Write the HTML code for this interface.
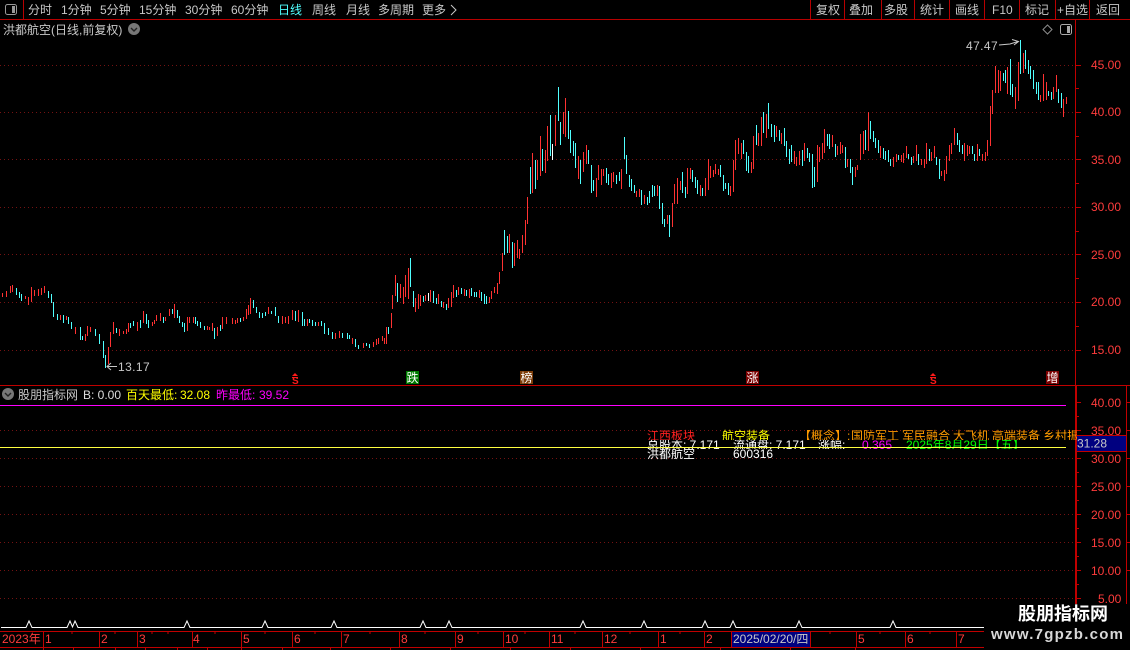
<!DOCTYPE html>
<html><head><meta charset="utf-8"><style>
html,body{margin:0;padding:0;background:#000;overflow:hidden;width:1130px;height:650px}
svg{display:block}
text{font-family:"Liberation Sans","WenQuanYi Zen Hei","Noto Sans CJK SC",sans-serif;font-size:12px}
.m{fill:#c8c8c8}.a{fill:#ff3c3c}
</style></head><body>
<svg width="1130" height="650" viewBox="0 0 1130 650" xmlns="http://www.w3.org/2000/svg">
<defs>
<clipPath id="r1"><rect x="640" y="428" width="437" height="12"/></clipPath>
<clipPath id="r2"><rect x="640" y="440" width="435" height="9"/></clipPath>
<clipPath id="r3"><rect x="640" y="448" width="435" height="13"/></clipPath>
</defs>
<rect width="1130" height="650" fill="#000"/>

<!-- grid -->
<g stroke="#741212" stroke-dasharray="1 3" fill="none">
<path d="M0 65.500H1075M0 112.500H1075M0 159.500H1075M0 207.500H1075M0 254.500H1075M0 302.500H1075M0 350.500H1075"/>
<path d="M0 430.500H1075M0 458.500H1075M0 486.500H1075M0 514.500H1075M0 542.500H1075M0 570.500H1075M0 598.500H1075"/>
</g>

<!-- candles -->
<g fill="none" stroke-width="1" shape-rendering="crispEdges" transform="translate(.5 0)">
<path stroke="#ff3232" d="M2 293V297M6 291V297M10 286V293M12 285V292M25 296V299M28 297V305M31 287V302M34 290V296M38 289V296M41 288V295M44 286V293M60 315V320M66 316V320M75 327V334M85 334V341M87 326V336M90 327V332M108 347V364M110 332V347M113 322V334M119 329V336M123 331V334M126 329V334M128 323V332M137 322V331M143 311V323M152 322V326M154 320V324M156 315V321M160 313V321M165 317V321M169 309V316M174 304V318M187 317V331M189 317V323M193 317V323M207 326V330M209 327V330M212 323V331M217 327V336M222 317V329M226 317V324M232 318V324M235 320V324M237 318V323M243 317V321M246 309V319M248 305V315M250 298V314M268 307V314M282 316V324M285 317V323M288 316V324M292 310V320M298 310V322M307 319V326M318 322V326M335 333V339M339 331V338M352 338V344M363 343V348M373 342V347M376 339V345M378 338V344M382 336V341M384 338V344M386 327V344M391 313V328M392 295V309M395 275V296M400 284V298M403 287V304M405 275V297M408 268V299M415 298V312M418 294V309M420 295V306M425 295V301M430 290V302M438 294V304M443 302V308M448 298V308M451 292V307M453 285V298M458 287V295M464 289V296M469 289V298M479 290V298M489 297V303M491 291V299M494 287V293M497 283V294M499 272V284M502 253V271M509 234V253M514 243V266M517 240V258M519 249V259M522 235V253M525 220V245M527 197V224M532 153V193M537 160V180M540 136V176M545 150V173M547 126V161M555 115V146M563 112V134M565 98V137M578 156V179M583 152V172M586 145V164M596 178V197M598 165V180M601 169V185M603 169V176M611 173V188M613 172V182M621 169V189M636 191V197M639 189V197M644 195V204M657 185V196M667 215V224M672 203V227M674 184V204M677 178V204M680 181V190M687 168V194M690 168V179M700 185V196M705 178V196M708 159V190M710 166V178M713 170V177M715 164V174M718 169V175M730 186V196M733 160V192M735 140V170M738 138V154M741 143V159M751 162V173M753 136V169M758 133V146M761 117V146M766 114V138M776 126V137M781 133V144M794 151V164M796 157V166M799 151V165M804 143V161M817 145V182M819 147V162M822 143V159M824 129V153M832 135V147M837 146V155M840 142V154M842 145V153M847 159V167M855 167V177M857 165V170M860 134V160M863 131V154M868 112V151M880 146V158M893 157V167M896 154V162M901 155V162M903 153V163M906 146V158M913 156V163M916 145V161M921 159V165M924 159V168M926 143V164M931 152V161M934 146V158M941 171V176M944 170V181M946 156V174M949 145V161M951 143V154M954 128V145M964 143V161M967 145V156M969 146V154M977 144V161M982 154V161M985 152V161M987 140V156M990 106V146M992 90V114M995 66V93M998 70V93M1000 71V91M1007 67V94M1015 87V109M1018 62V101M1023 53V73M1040 95V102M1043 74V101M1046 82V100M1053 87V99M1056 75V92M1063 99V117M1066 97V104"/>
<path stroke="#50ffff" d="M16 288V295M19 292V298M21 294V301M48 291V298M51 294V303M53 302V317M57 314V320M63 315V323M68 317V324M71 322V329M80 327V340M82 336V340M95 329V336M99 334V344M103 341V358M105 355V368M116 328V333M130 323V328M133 321V326M140 320V328M146 314V324M148 320V328M163 317V323M172 309V314M177 310V318M179 316V323M182 322V327M184 323V332M195 317V324M197 321V326M200 322V328M204 326V330M214 328V339M220 325V331M240 318V322M253 300V308M256 307V313M259 312V318M262 313V318M265 312V316M271 311V314M275 307V316M278 316V323M295 311V321M302 312V326M304 319V326M309 319V323M312 320V326M315 322V326M321 321V326M324 323V334M328 328V335M332 332V339M342 333V338M347 333V339M349 335V339M355 339V347M358 345V349M366 343V346M369 344V348M388 327V334M397 283V302M410 258V287M413 291V307M423 296V302M433 291V303M436 298V304M441 301V307M446 304V310M456 290V297M461 288V294M466 290V296M471 288V296M474 292V297M476 292V297M481 292V301M484 294V304M486 296V304M504 230V255M507 236V253M512 242V268M530 167V194M535 160V189M542 149V171M550 115V156M558 87V121M560 122V145M568 111V139M570 130V153M573 141V156M575 143V168M580 160V184M588 150V164M591 165V193M593 180V191M606 168V183M608 174V185M616 175V184M619 172V181M624 137V159M626 155V174M629 175V187M631 179V191M634 185V193M641 190V205M647 197V205M649 191V203M652 185V197M654 186V196M659 186V209M662 203V224M664 219V227M669 215V237M682 172V193M685 187V198M692 170V182M695 177V188M697 180V194M702 188V196M720 165V177M723 175V191M725 183V189M728 183V195M743 140V154M746 152V171M748 156V173M756 125V145M763 112V133M768 103V129M771 124V137M774 125V142M779 130V141M784 128V146M786 141V157M789 149V164M791 145V162M802 150V166M807 148V158M809 153V162M812 154V188M814 167V187M827 134V146M829 134V149M835 144V157M845 147V168M850 159V173M852 167V185M865 130V150M870 121V139M873 131V142M875 138V148M878 140V153M883 148V159M885 151V160M888 150V162M890 159V166M898 155V160M908 154V159M911 157V165M918 154V165M929 149V161M936 157V165M939 159V179M957 133V145M959 140V152M962 145V154M972 146V154M974 154V161M979 149V156M1003 73V81M1005 70V83M1010 59V95M1012 84V97M1020 40V74M1025 50V69M1028 60V74M1030 66V79M1033 70V89M1036 82V94M1038 82V100M1048 91V96M1051 92V100M1058 89V103M1061 93V108"/>
<path stroke="#ffffff" d="M428 293V301M552 144V160"/>
</g>

<!-- toolbar -->
<path d="M0 19.500H1130M23.500 0V19M810.500 0V19M844.500 0V19M881.500 0V19M914.500 0V19M949.500 0V19M984.500 0V19M1019.500 0V19M1055.500 0V19M1089.500 0V19" stroke="#b80000" fill="none"/>
<rect x="5.500" y="4.500" width="11" height="10" rx="2" fill="none" stroke="#999"/><rect x="12" y="6" width="3" height="7" fill="#999"/>
<g class="m">
<text x="28" y="14">分时</text><text x="61" y="14">1分钟</text><text x="100" y="14">5分钟</text><text x="139" y="14">15分钟</text><text x="185" y="14">30分钟</text><text x="231" y="14">60分钟</text>
<text x="278" y="14" style="fill:#50ffff">日线</text><text x="312" y="14">周线</text><text x="346" y="14">月线</text><text x="378" y="14">多周期</text><text x="422" y="14">更多</text>
<text x="816" y="14">复权</text><text x="849" y="14">叠加</text><text x="884" y="14">多股</text><text x="920" y="14">统计</text><text x="955" y="14">画线</text><text x="992" y="14">F10</text><text x="1025" y="14">标记</text><text x="1057" y="14">+自选</text><text x="1096" y="14">返回</text>
<text x="3" y="34">洪都航空(日线,前复权)</text>
</g>
<path d="M451 5L456 10L451 15" stroke="#c8c8c8" fill="none"/>
<circle cx="134" cy="29" r="6" fill="#777"/><path d="M131 28L134 31L137 28" stroke="#222" stroke-width="1.400" fill="none"/>
<path d="M1047.500 25L1052 29.500L1047.500 34L1043 29.500Z" fill="none" stroke="#8c8c8c"/>
<rect x="1060.500" y="24.500" width="11" height="10" rx="2" fill="none" stroke="#aaa"/><rect x="1067" y="26" width="3" height="7" fill="#aaa"/>

<!-- annotations -->
<text x="966" y="50" class="m" style="letter-spacing:.4px">47.47</text>
<path d="M999 45L1010 44L1018 41.500M1012 39.500L1018.500 41.500L1014 45" stroke="#c8c8c8" fill="none"/>
<path d="M107 366.500H117M111 363L107 366.500L111 370" stroke="#c8c8c8" fill="none"/>
<text x="118" y="371" class="m" style="letter-spacing:.4px">13.17</text>

<!-- signals -->
<g fill="#ff1a1a">
<path d="M295 373L298 376H292Z"/><rect x="292" y="377" width="6" height="1"/><text x="292" y="384" style="font-size:10px;font-weight:bold;fill:#ff1a1a">S</text>
<path d="M933 373L936 376H930Z"/><rect x="930" y="377" width="6" height="1"/><text x="930" y="384" style="font-size:10px;font-weight:bold;fill:#ff1a1a">S</text>
</g>
<rect x="406" y="371" width="13" height="13" fill="#007a00"/><text x="406.500" y="382" style="fill:#fff">跌</text>
<rect x="520" y="371" width="13" height="13" fill="#7c3c08"/><text x="520.500" y="382" style="fill:#fff">榜</text>
<rect x="746" y="371" width="13" height="13" fill="#7c0000"/><text x="746.500" y="382" style="fill:#fff">涨</text>
<rect x="1046" y="371" width="13" height="13" fill="#7c0000"/><text x="1046.500" y="382" style="fill:#fff">增</text>

<!-- right axis -->
<g stroke="#c00000" fill="none">
<path d="M1075.500 19V386M0 385.500H1130"/>
<path d="M1075 65.500H1081M1075 112.500H1081M1075 159.500H1081M1075 207.500H1081M1075 254.500H1081M1075 302.500H1081M1075 350.500H1081"/>
<path d="M1075 88.500H1079M1075 136.500H1079M1075 183.500H1079M1075 231.500H1079M1075 278.500H1079M1075 326.500H1079"/>
<path d="M1075.500 386V606M1076.500 386V606M1126.500 386V606"/>
<path d="M1076 402.500H1081M1076 430.500H1081M1076 458.500H1081M1076 486.500H1081M1076 514.500H1081M1076 542.500H1081M1076 570.500H1081M1076 598.500H1081"/>
<path d="M1076 416.500H1079M1076 444.500H1079M1076 472.500H1079M1076 500.500H1079M1076 528.500H1079M1076 556.500H1079M1076 584.500H1079"/>
<path d="M1126 402.500H1130M1126 430.500H1130M1126 458.500H1130M1126 486.500H1130M1126 514.500H1130M1126 542.500H1130M1126 570.500H1130"/>
</g>
<g class="a">
<text x="1091" y="69">45.00</text><text x="1091" y="116">40.00</text><text x="1091" y="164">35.00</text><text x="1091" y="211">30.00</text><text x="1091" y="259">25.00</text><text x="1091" y="306">20.00</text><text x="1091" y="354">15.00</text>
<text x="1091" y="407">40.00</text><text x="1091" y="435">35.00</text><text x="1091" y="463">30.00</text><text x="1091" y="491">25.00</text><text x="1091" y="519">20.00</text><text x="1091" y="547">15.00</text><text x="1091" y="575">10.00</text><text x="1098" y="603">5.00</text>
</g>
<rect x="1076.500" y="435.500" width="50" height="16" fill="#000080" stroke="#c00000"/>
<text x="1077" y="447.500" style="fill:#c8c8c8">31.28</text>

<!-- sub header -->
<circle cx="8" cy="394" r="6" fill="#777"/><path d="M5 393L8 396L11 393" stroke="#222" stroke-width="1.400" fill="none"/>
<text x="18" y="399" class="m">股朋指标网</text>
<text x="83" y="399" style="fill:#ddd">B: 0.00</text>
<text x="126" y="399" style="fill:#ffff00">百天最低:</text><text x="180" y="399" style="fill:#ffff00">32.08</text>
<text x="216" y="399" style="fill:#ff00ff">昨最低:</text><text x="259" y="399" style="fill:#ff00ff">39.52</text>
<path d="M0 405.500H1066" stroke="#ff00ff"/>

<!-- info rows -->
<g clip-path="url(#r1)">
<text x="647" y="440" style="fill:#ff2020">江西板块</text>
<text x="722" y="440" style="fill:#ffff00">航空装备</text>
<text x="799" y="440" style="fill:#ff9a00">【概念】:</text>
<text x="851" y="440" style="fill:#ff9a00">国防军工</text>
<text x="902" y="440" style="fill:#ff9a00">军民融合</text>
<text x="953" y="440" style="fill:#ff9a00">大飞机</text>
<text x="992" y="440" style="fill:#ff9a00">高端装备</text>
<text x="1043" y="440" style="fill:#ff9a00">乡村振兴</text>
</g>
<g clip-path="url(#r2)">
<text x="647" y="449" style="fill:#fff">总股本: 7.171</text>
<text x="733" y="449" style="fill:#fff">流通盘: 7.171</text>
<text x="818" y="449" style="fill:#fff">涨幅:</text>
<text x="862" y="449" style="fill:#ff00ff">0.365</text>
<text x="906" y="449" style="fill:#00ff00">2025年8月29日【五】</text>
</g>
<path d="M0 447.500H1066" stroke="#ffff40"/>
<g clip-path="url(#r3)">
<text x="647" y="458" style="fill:#fff">洪都航空</text>
<text x="733" y="458" style="fill:#fff">600316</text>
</g>

<!-- pulse line -->
<path d="M1 627.500H26L29 621L32 627.500H67L70 621L72.500 627L75 621L78 627.500H184L187 621L190 627.500H262L265 621L268 627.500H331L334 621L337 627.500H420L423 621L426 627.500H446L449 621L452 627.500H580L583 621L586 627.500H641L644 621L647 627.500H702L705 621L708 627.500H730L733 621L736 627.500H796L799 621L802 627.500H890L893 621L896 627.500H984" stroke="#fff" fill="none"/>

<!-- time axis -->
<path d="M0 631.500H984M0 647.500H984M43.500 631V647M99.500 631V647M137.500 631V647M192.500 631V647M241.500 631V647M292.500 631V647M341.500 631V647M399.500 631V647M455.500 631V647M503.500 631V647M549.500 631V647M602.500 631V647M658.500 631V647M704.500 631V647M856.500 631V647M905.500 631V647M956.500 631V647" stroke="#c00000" fill="none"/>
<path d="M72 631V634M115 631V634M152 631V634M168 631V634M215 631V634M265 631V634M315 631V634M370 631V634M425 631V634M478 631V634M525 631V634M575 631V634M630 631V634M680 631V634M830 631V634M880 631V634M930 631V634" stroke="#c00000" fill="none"/>
<path d="M43.500 648V650M73.500 648V650M115.500 648V650M145.500 648V650M177.500 648V650M207.500 648V650M241.500 648V650M282.500 648V650M330.500 648V650M390.500 648V650M450.500 648V650M510.500 648V650M570.500 648V650M640.500 648V650M720.500 648V650M790.500 648V650M855.500 648V650" stroke="#c00000" fill="none"/>
<g class="a">
<text x="2" y="643">2023年</text><text x="45" y="643">1</text><text x="101" y="643">2</text><text x="139" y="643">3</text><text x="193" y="643">4</text><text x="243" y="643">5</text><text x="294" y="643">6</text><text x="343" y="643">7</text><text x="401" y="643">8</text><text x="457" y="643">9</text><text x="505" y="643">10</text><text x="551" y="643">11</text><text x="604" y="643">12</text><text x="660" y="643">1</text><text x="706" y="643">2</text><text x="858" y="643">5</text><text x="907" y="643">6</text><text x="958" y="643">7</text>
</g>
<rect x="731.500" y="631.500" width="79" height="16" fill="#000080" stroke="#c00000"/>
<text x="733" y="643" style="fill:#c8c8c8">2025/02/20/四</text>

<!-- watermark -->
<rect x="984" y="604" width="146" height="46" fill="#000"/>
<text x="1018" y="620" style="font-size:18px;font-weight:bold;fill:#fff">股朋指标网</text>
<text x="991" y="639" textLength="132" lengthAdjust="spacing" style="font-size:15px;font-weight:bold;fill:#d8d8d8">www.7gpzb.com</text>
</svg>
</body></html>
